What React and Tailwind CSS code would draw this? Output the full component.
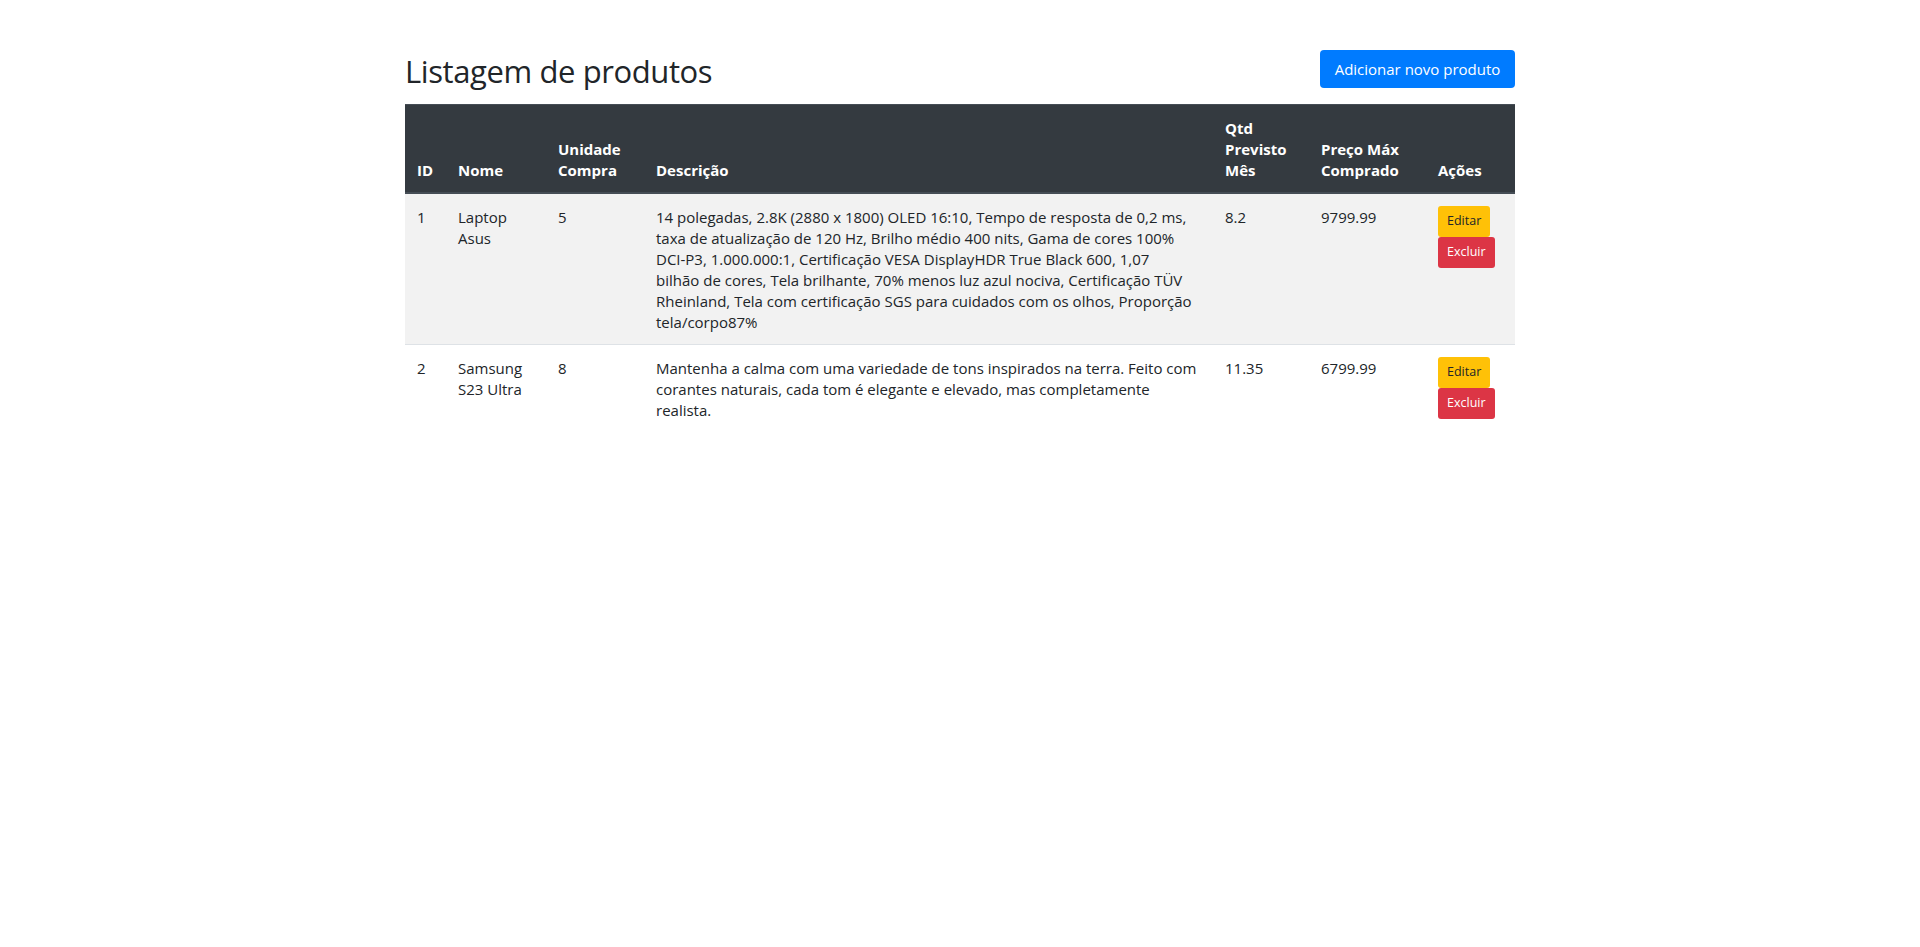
import React from "react";

const FONT = { fontFamily: '"Open Sans", "Noto Sans", sans-serif' };

function Btn({ children, className }) {
  return (
    <button
      className={
        "h-[31px] px-[9px] text-[12.5px] leading-none rounded-[3px] whitespace-nowrap " +
        className
      }
    >
      {children}
    </button>
  );
}

const rows = [
  {
    id: "1",
    nome: ["Laptop", "Asus"],
    un: "5",
    desc: [
      "14 polegadas, 2.8K (2880 x 1800) OLED 16:10, Tempo de resposta de 0,2 ms,",
      "taxa de atualização de 120 Hz, Brilho médio 400 nits, Gama de cores 100%",
      "DCI-P3, 1.000.000:1, Certificação VESA DisplayHDR True Black 600, 1,07",
      "bilhão de cores, Tela brilhante, 70% menos luz azul nociva, Certificação TÜV",
      "Rheinland, Tela com certificação SGS para cuidados com os olhos, Proporção",
      "tela/corpo87%",
    ],
    qtd: "8.2",
    preco: "9799.99",
    striped: true,
  },
  {
    id: "2",
    nome: ["Samsung", "S23 Ultra"],
    un: "8",
    desc: [
      "Mantenha a calma com uma variedade de tons inspirados na terra. Feito com",
      "corantes naturais, cada tom é elegante e elevado, mas completamente",
      "realista.",
    ],
    qtd: "11.35",
    preco: "6799.99",
    striped: false,
  },
];

function Lines({ lines }) {
  return lines.map((l, i) => (
    <div key={i} className="whitespace-nowrap">
      {l}
    </div>
  ));
}

export default function App() {
  return (
    <div className="min-h-[947px] bg-white text-[#212529]" style={FONT}>
      <div className="w-[1110px] mx-auto pt-[50px]">
        <div className="flex items-center justify-between h-[38px] mb-4">
          <h2 className="text-[31px] leading-[1.2] font-normal text-[#212529] tracking-[-0.4px] pt-[5px]">
            Listagem de produtos
          </h2>
          <button className="w-[195px] h-[38px] rounded-[4px] bg-[#007bff] text-white text-[15px] leading-none whitespace-nowrap">
            Adicionar novo produto
          </button>
        </div>
        <table className="w-[1110px] table-fixed border-collapse text-[15px] leading-[21px]">
          <colgroup>
            <col className="w-[41px]" />
            <col className="w-[100px]" />
            <col className="w-[98px]" />
            <col className="w-[569px]" />
            <col className="w-[96px]" />
            <col className="w-[117px]" />
            <col className="w-[89px]" />
          </colgroup>
          <thead>
            <tr className="bg-[#343a40] text-white font-bold">
              {[
                ["ID"],
                ["Nome"],
                ["Unidade", "Compra"],
                ["Descrição"],
                ["Qtd", "Previsto", "Mês"],
                ["Preço Máx", "Comprado"],
                ["Ações"],
              ].map((h, i) => (
                <th
                  key={i}
                  className="px-3 pt-[13px] pb-[11px] text-left align-bottom font-bold border-t border-t-[#454d55] border-b-2 border-b-[#454d55]"
                >
                  <Lines lines={h} />
                </th>
              ))}
            </tr>
          </thead>
          <tbody>
            {rows.map((r, idx) => {
              const td = "px-3 pt-[13px] pb-[11px] align-top " + (idx > 0 ? "border-t border-[#dee2e6]" : "");
              const tdb = "px-3 pt-3 pb-3 align-top " + (idx > 0 ? "border-t border-[#dee2e6]" : "");
              return (
                <tr key={r.id} className={r.striped ? "bg-[#f2f2f2]" : "bg-white"}>
                  <td className={td}>{r.id}</td>
                  <td className={td}>
                    <Lines lines={r.nome} />
                  </td>
                  <td className={td}>{r.un}</td>
                  <td className={td}>
                    <Lines lines={r.desc} />
                  </td>
                  <td className={td}>{r.qtd}</td>
                  <td className={td}>{r.preco}</td>
                  <td className={tdb}>
                    <div className="flex flex-col items-start">
                      <Btn className="bg-[#ffc107] text-[#212529]">Editar</Btn>
                      <Btn className="bg-[#dc3545] text-white">Excluir</Btn>
                    </div>
                  </td>
                </tr>
              );
            })}
          </tbody>
        </table>
      </div>
    </div>
  );
}
